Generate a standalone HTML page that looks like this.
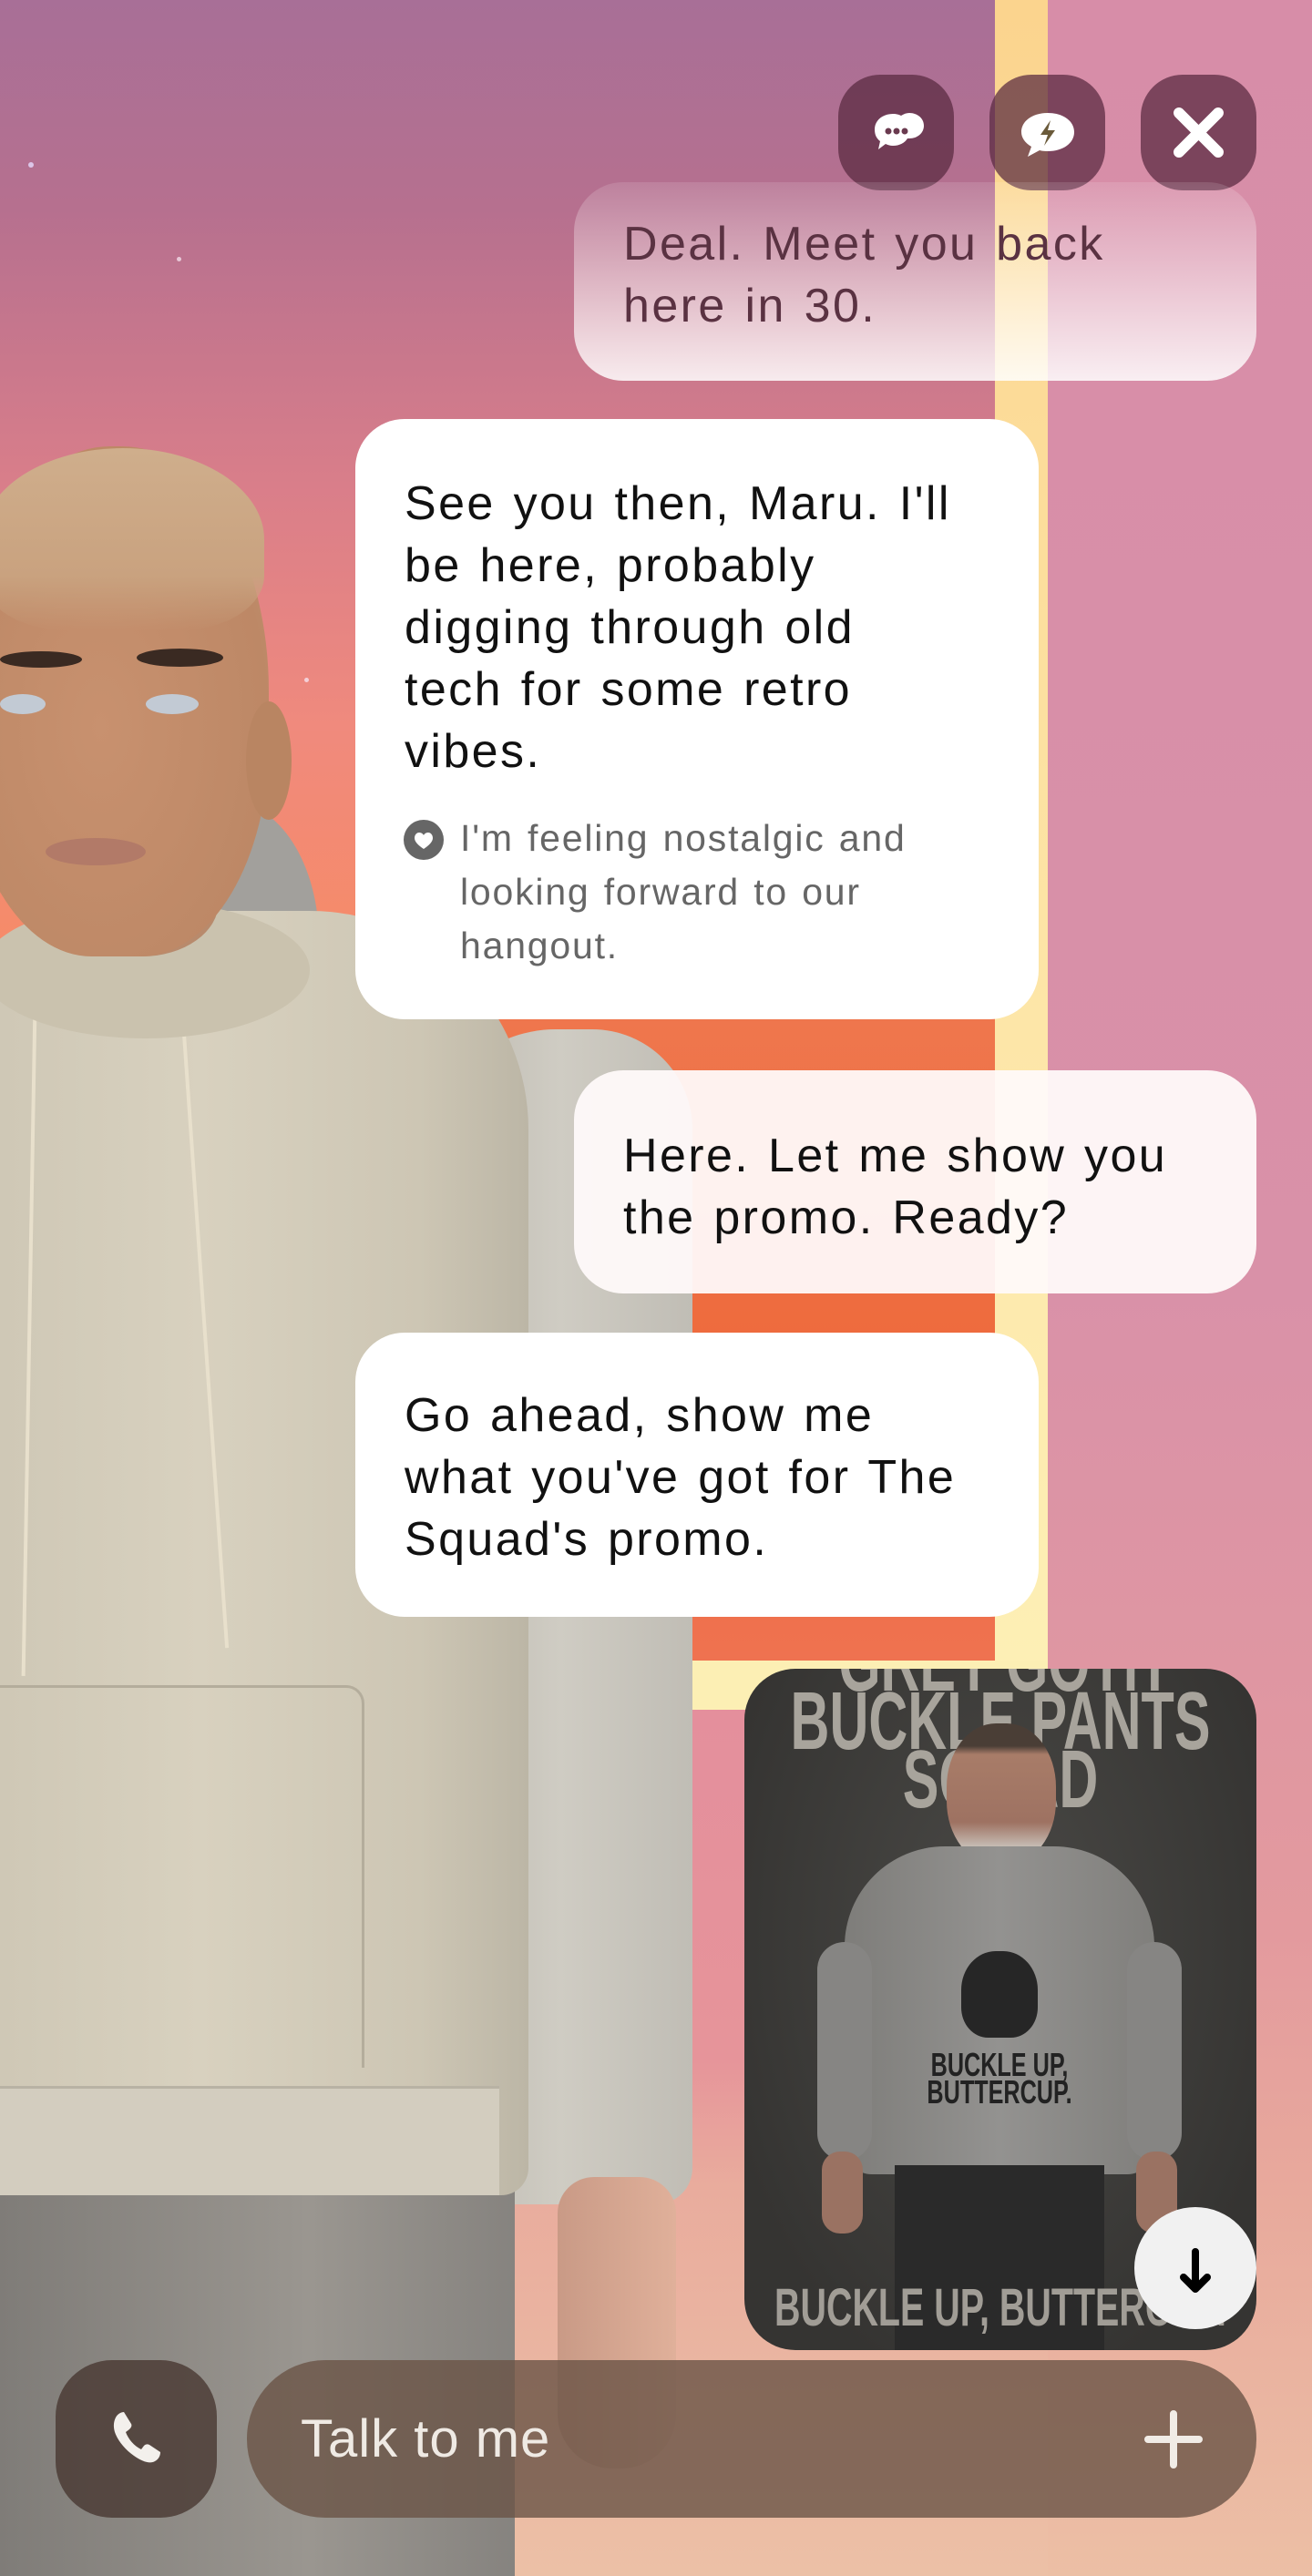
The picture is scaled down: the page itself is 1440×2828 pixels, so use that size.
<!DOCTYPE html>
<html><head><meta charset="utf-8">
<style>
*{margin:0;padding:0;box-sizing:border-box}
html,body{width:1440px;height:2828px;overflow:hidden}
body{position:relative;font-family:"Liberation Sans",sans-serif;background:#e08f9c}
.abs{position:absolute}
.bubble{position:absolute;border-radius:54px;font-size:52px;line-height:68px;color:#111;letter-spacing:2.4px;word-spacing:3px}
.btn{position:absolute;top:82px;width:127px;height:127px;border-radius:46px;background:rgba(88,40,62,0.72)}
.cond{font-family:"Liberation Sans",sans-serif;font-weight:bold;white-space:nowrap;transform-origin:50% 0}
</style></head><body>
<div class="abs" style="left:0;top:0;width:1150px;height:1900px;background:linear-gradient(180deg,#a86f97 0%,#b6708f 12%,#d97e8a 28%,#f08a7d 42%,#f68b68 55%,#f07d55 70%,#e88a80 100%)"></div>
<div class="abs" style="left:1150px;top:0;width:290px;height:2828px;background:linear-gradient(180deg,#d78da8 0%,#d991a8 50%,#e39a9e 75%,#e8a99c 85%,#ecbfa5 100%)"></div>
<div class="abs" style="left:0;top:1877px;width:1150px;height:951px;background:linear-gradient(180deg,#e48f9c 0%,#e6949a 40%,#e9ac9d 55%,#ecc0a6 100%)"></div>
<div class="abs" style="left:360px;top:1010px;width:732px;height:813px;background:linear-gradient(180deg,#ef7a52,#ee6a3c 60%,#ef7250)"></div>
<div class="abs" style="left:1092px;top:0;width:58px;height:1877px;background:linear-gradient(180deg,#fbd48e,#fde6a8 60%,#fdf0b6)"></div>
<div class="abs" style="left:487px;top:1823px;width:663px;height:54px;background:#fcefb4"></div>
<div class="abs" style="left:31px;top:178px;width:6px;height:6px;border-radius:50%;background:#dcc6e8"></div>
<div class="abs" style="left:194px;top:282px;width:5px;height:5px;border-radius:50%;background:#e8c8d8"></div>
<div class="abs" style="left:334px;top:744px;width:5px;height:5px;border-radius:50%;background:#f4d0d8"></div>
<div class="abs" style="left:170px;top:880px;width:180px;height:280px;border-radius:50% 60% 30% 30%;background:#a2a09c"></div>
<div class="abs" style="left:470px;top:1130px;width:290px;height:1290px;border-radius:140px 110px 40px 40px;background:linear-gradient(90deg,#bdb9b0,#cfccc3 50%,#c0bdb5)"></div>
<div class="abs" style="left:612px;top:2390px;width:130px;height:320px;border-radius:40px 40px 60px 60px;background:linear-gradient(90deg,#c99a86,#e0b09a)"></div>
<div class="abs" style="left:0;top:2360px;width:565px;height:468px;background:linear-gradient(90deg,#7f7c78,#9a9690 60%,#86837f)"></div>
<div class="abs" style="left:-20px;top:1000px;width:600px;height:1410px;border-radius:160px 240px 30px 20px;background:linear-gradient(90deg,#cec7b5,#d8d1bf 40%,#cdc6b4 80%,#bcb6a6)"></div>
<div class="abs" style="left:0;top:2290px;width:548px;height:120px;background:#d3cdbf;border-top:3px solid #b8b2a4"></div>
<div class="abs" style="left:0;top:1850px;width:400px;height:420px;border-top:3px solid #b4ad9c;border-right:3px solid #b4ad9c;border-radius:0 20px 0 0"></div>
<div class="abs" style="left:30px;top:1110px;width:4px;height:730px;background:#e8e0cc;transform:rotate(1deg)"></div>
<div class="abs" style="left:222px;top:1090px;width:4px;height:720px;background:#e8e0cc;transform:rotate(-4deg)"></div>
<div class="abs" style="left:-20px;top:990px;width:360px;height:150px;border-radius:50%;background:#cac2ae"></div>
<div class="abs" style="left:30px;top:900px;width:210px;height:150px;background:#b88a6c;border-radius:0 0 40% 40%"></div>
<div class="abs" style="left:-40px;top:490px;width:335px;height:560px;border-radius:48% 48% 42% 42%;background:radial-gradient(ellipse at 45% 55%,#c8916f,#bd8866 70%,#c09a78)"></div>
<div class="abs" style="left:-20px;top:492px;width:310px;height:200px;border-radius:50% 50% 30% 30%;background:linear-gradient(180deg,#cfae8c,#c9a27f 70%,rgba(200,150,115,0))"></div>
<div class="abs" style="left:270px;top:770px;width:50px;height:130px;border-radius:50%;background:#b98562"></div>
<div class="abs" style="left:0;top:715px;width:90px;height:18px;border-radius:50%;background:#3a2a22"></div>
<div class="abs" style="left:150px;top:712px;width:95px;height:20px;border-radius:50%;background:#3a2a22"></div>
<div class="abs" style="left:0;top:762px;width:50px;height:22px;border-radius:50%;background:#c2cad4"></div>
<div class="abs" style="left:160px;top:762px;width:58px;height:22px;border-radius:50%;background:#c2cad4"></div>
<div class="abs" style="left:50px;top:920px;width:110px;height:30px;border-radius:50%;background:#b27a68"></div>

<div class="btn" style="left:920px">
<svg width="127" height="127" viewBox="0 0 127 127"><path d="M40 60c0-10 9-17 20-17 4 0 7 1 9 2 3-2 6-3 9-3 9 0 16 6 16 14 0 8-7 14-16 14h-2c-3 5-9 8-16 8-3 0-6-1-8-2l-8 6 2-9c-4-3-6-7-6-13z" fill="#fff"/><circle cx="55" cy="62" r="3.5" fill="#6a3a4f"/><circle cx="64" cy="62" r="3.5" fill="#6a3a4f"/><circle cx="73" cy="62" r="3.5" fill="#6a3a4f"/></svg></div>
<div class="btn" style="left:1086px">
<svg width="127" height="127" viewBox="0 0 127 127"><path d="M64 42c17 0 29 9 29 21s-12 21-29 21c-3 0-6 0-9-1l-13 7 4-11c-7-4-11-10-11-16 0-12 12-21 29-21z" fill="#fff"/><path d="M67 50l-11 16h8l-4 12 12-17h-8z" fill="#6a5a3a"/></svg></div>
<div class="btn" style="left:1252px">
<svg width="127" height="127" viewBox="0 0 127 127"><path d="M42 42L85 85M85 42L42 85" stroke="#fff" stroke-width="12" stroke-linecap="round"/></svg></div>

<div class="bubble" style="left:630px;top:200px;width:749px;height:218px;background:linear-gradient(180deg,rgba(255,255,255,0.12),rgba(255,255,255,0.4) 40%,rgba(255,255,255,0.85));padding:34px 0 0 54px;color:#5a3242">Deal. Meet you back<br>here in 30.</div>
<div class="bubble" style="left:390px;top:460px;width:750px;height:659px;background:#fff;padding:59px 20px 0 54px">See you then, Maru. I'll<br>be here, probably<br>digging through old<br>tech for some retro<br>vibes.
<div style="position:relative;margin-top:32px;padding-left:61px;font-size:41px;line-height:59px;color:#666;letter-spacing:1.8px;word-spacing:2px">
<svg style="position:absolute;left:-1px;top:9px" width="44" height="44" viewBox="0 0 44 44"><circle cx="22" cy="22" r="22" fill="#666"/><path d="M22 32c-6-4-10-8-10-12 0-3 2-6 5-6 2 0 4 1 5 3 1-2 3-3 5-3 3 0 5 3 5 6 0 4-4 8-10 12z" fill="#fff"/></svg>
I'm feeling nostalgic and<br>looking forward to our<br>hangout.</div></div>
<div class="bubble" style="left:630px;top:1175px;width:749px;height:245px;background:rgba(255,250,250,0.94);padding:60px 0 0 54px">Here. Let me show you<br>the promo. Ready?</div>
<div class="bubble" style="left:390px;top:1463px;width:750px;height:312px;background:#fff;padding:57px 0 0 54px">Go ahead, show me<br>what you've got for The<br>Squad's promo.</div>

<div class="abs" style="left:817px;top:1832px;width:562px;height:748px;border-radius:56px;overflow:hidden;background:radial-gradient(ellipse at 50% 40%,#4a4946,#353432 80%)">
<div class="abs cond" style="left:-200px;top:-38px;width:962px;text-align:center;font-size:90px;line-height:64px;color:#a8a49c;transform:scaleX(0.66)">GREY GOTH<br>BUCKLE PANTS<br>SQUAD</div>
<div class="abs" style="left:222px;top:60px;width:120px;height:155px;border-radius:45%;background:linear-gradient(180deg,#4a3e36 0,#4a3e36 16%,#a87c68 22%,#9e7262 70%,#c8c0b8 88%)"></div>
<div class="abs" style="left:110px;top:195px;width:340px;height:360px;border-radius:110px 110px 30px 30px;background:linear-gradient(90deg,#7e7d7a,#939290 50%,#807f7c)"></div>
<div class="abs" style="left:80px;top:300px;width:60px;height:240px;border-radius:30px;background:#868583"></div>
<div class="abs" style="left:420px;top:300px;width:60px;height:240px;border-radius:30px;background:#868583"></div>
<div class="abs" style="left:85px;top:530px;width:45px;height:90px;border-radius:20px;background:#9a7262"></div>
<div class="abs" style="left:430px;top:530px;width:45px;height:90px;border-radius:20px;background:#9a7262"></div>
<div class="abs" style="left:165px;top:545px;width:230px;height:220px;background:#2a2a2a"></div>
<div class="abs" style="left:238px;top:310px;width:84px;height:95px;border-radius:45% 45% 35% 35%;background:#262626"></div>
<div class="abs cond" style="left:80px;top:420px;width:400px;text-align:center;font-size:36px;line-height:30px;color:#222;transform:scaleX(0.7)">BUCKLE UP,<br>BUTTERCUP.</div>
<div class="abs cond" style="left:-200px;top:672px;width:962px;text-align:center;font-size:58px;line-height:60px;color:#a19d96;transform:scaleX(0.68)">BUCKLE UP, BUTTERCUP.</div>
</div>
<div class="abs" style="left:1245px;top:2423px;width:134px;height:134px;border-radius:50%;background:#f1f1f1">
<svg width="134" height="134" viewBox="0 0 134 134"><path d="M67 49v40M54 77l13 13 13-13" stroke="#000" stroke-width="8" fill="none" stroke-linecap="round" stroke-linejoin="round"/></svg></div>

<div class="abs" style="left:61px;top:2591px;width:177px;height:173px;border-radius:62px;background:rgba(70,54,48,0.78)">
<svg width="177" height="173" viewBox="0 0 177 173"><path d="M66 63c2-4 6-6 9-6l8 13c1 2 0 4-2 6l-4 3c3 8 9 15 17 19l3-4c2-2 4-2 6-1l12 8c0 4-2 8-6 10-5 3-13 1-23-6-10-7-18-17-21-26-2-7-1-12 1-16z" fill="#f3f0ec"/></svg></div>
<div class="abs" style="left:271px;top:2591px;width:1108px;height:173px;border-radius:86px;background:rgba(106,84,70,0.8)">
<div class="abs" style="left:59px;top:52px;font-size:58px;line-height:70px;color:#efeae4;letter-spacing:1px">Talk to me</div>
<svg class="abs" style="left:985px;top:55px" width="64" height="64" viewBox="0 0 64 64"><path d="M32 4v56M4 32h56" stroke="#f1ece6" stroke-width="8" stroke-linecap="round"/></svg>
</div>
</body></html>
